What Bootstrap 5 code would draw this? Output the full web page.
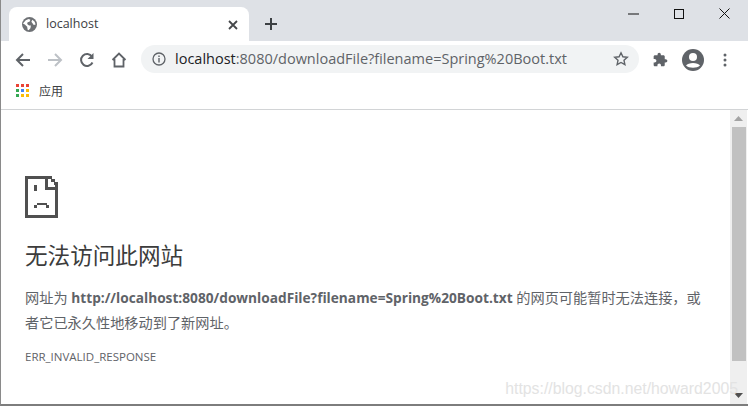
<!DOCTYPE html>
<html lang="zh">
<head>
<meta charset="utf-8">
<title>localhost</title>
<link href="https://cdn.jsdelivr.net/npm/bootstrap@5.3.3/dist/css/bootstrap.min.css" rel="stylesheet">
<style>
html, body { height: 100%; overflow: hidden; }
body { font-family: "Open Sans", "Noto Sans CJK SC", sans-serif; background: #fff; color: #5f6368; }
.browser-win { height: 406px; width: 748px; border-left: 1px solid #8a8a8a; border-bottom: 2px solid #7d7d7d; position: relative; }
.tab-strip { height: 41px; background: #dee1e6; }
.tab-active { width: 240px; height: 34px; margin-left: 8px; background: #fff; border-radius: 8px 8px 0 0; padding: 1px 11px 0 13px; }
.tab-title { font-size: 12.5px; color: #3c4043; margin-left: 9px; }
.tab-new { margin-left: 8px; margin-bottom: 3px; }
.win-ctrls { margin-left: auto; margin-bottom: 22px; gap: 35px; padding-right: 18px; }
.tool-row { height: 37px; background: #fff; padding-left: 14px; }
.omni-box { width: 498px; height: 28px; background: #f1f3f4; border-radius: 14px; margin-left: 14px; padding-left: 11px; padding-right: 10px; margin-top: -1px; }
.omni-url { font-size: 14.5px; color: #5f6368; margin-left: 9px; white-space: nowrap; }
.omni-url b { font-weight: 400; color: #202124; }
.ext-icon { margin-left: 14px; }
.user-icon { margin-left: 14px; }
.more-icon { margin-left: 19px; }
.bm-row { height: 32px; border-bottom: 1px solid #d2d4d6; padding: 0 0 5px 15px; font-size: 12px; color: #3c4043; }
.bm-row span { margin-left: 9px; font-family: "Noto Sans CJK SC", sans-serif; }
.page-area { height: 294px; }
.err-main { width: 729px; padding: 66px 0 0 24px; }
.err-title { font-size: 22.6px; font-weight: 400; color: #3c3c3c; margin: 22px 0 0 0; line-height: 30px; font-family: "Noto Sans CJK SC", sans-serif; }
.err-text { font-size: 14.2px; line-height: 25px; color: #5f6368; margin: 15px 0 0 0; white-space: nowrap; }
.err-text b { color: #5f6368; font-weight: 700; font-size: 13.7px; }
.err-code { font-size: 11.5px; color: #5f6368; margin: 14px 0 0 0; line-height: 16px; }
.scroll-track { width: 17px; background: #efefef; }
.scroll-thumb { width: 14px; height: 234px; background: #c1c1c1; margin: 0 auto; }
.scroll-end { height: 17px; }
.csdn-mark { position: absolute; right: 10px; bottom: 3px; font-family: "Liberation Sans", sans-serif; font-size: 15.8px; color: #e3e3e3; }
</style>
</head>
<body>
<div class="browser-win">
    <div class="tab-strip d-flex align-items-end">
        <div class="tab-active d-flex align-items-center">
            <svg width="15" height="15" viewBox="0 0 16 16"><circle cx="8" cy="8" r="8" fill="#6e7175"/><path d="M4 3.500l3-1.500 2 1-1 2-2 .5-.5 2 2 1.500 2 0-.5 3-2 2-1-.5-.5-3-2.500-2.500-2-1zM11 3l2.500 2 1 3-2 .5-1.500-2-1-1.500z" fill="#fff"/></svg>
            <span class="tab-title">localhost</span>
            <svg class="ms-auto" width="10" height="10" viewBox="0 0 10 10"><path d="M1 1l8 8M9 1l-8 8" stroke="#45474a" stroke-width="1.800"/></svg>
        </div>
        <svg class="tab-new" width="28" height="28" viewBox="0 0 28 28"><path d="M14 8v12M8 14h12" stroke="#3c4043" stroke-width="2"/></svg>
        <div class="win-ctrls d-flex align-items-center">
            <svg width="11" height="10" viewBox="0 0 11 10"><path d="M0 5h11" stroke="#111" stroke-width="1"/></svg>
            <svg width="10" height="10" viewBox="0 0 10 10"><rect x=".5" y=".5" width="9" height="9" fill="none" stroke="#111"/></svg>
            <svg width="11" height="11" viewBox="0 0 11 11"><path d="M.5.5l10 10M10.500.5l-10 10" stroke="#111" stroke-width="1"/></svg>
        </div>
    </div>
    <div class="tool-row d-flex align-items-center">
        <svg width="16" height="16" viewBox="0 0 16 16"><path d="M15 8H2.500M8 2L2 8l6 6" fill="none" stroke="#5f6368" stroke-width="2"/></svg>
        <svg class="ms-3" width="16" height="16" viewBox="0 0 16 16"><path d="M1 8h12.500M8 2l6 6-6 6" fill="none" stroke="#bdc1c6" stroke-width="2"/></svg>
        <svg class="ms-3" width="16" height="16" viewBox="0 0 16 16"><path d="M13.500 10.500A6 6 0 1 1 13 4.500" fill="none" stroke="#5f6368" stroke-width="2"/><path d="M14.500 1v6h-6z" fill="#5f6368"/></svg>
        <svg class="ms-3" width="16" height="16" viewBox="0 0 16 16"><path d="M1.500 8L8 1.500 14.500 8M3.500 7v7.500h9V7" fill="none" stroke="#5f6368" stroke-width="1.800"/></svg>
        <div class="omni-box d-flex align-items-center">
            <svg width="14" height="14" viewBox="0 0 14 14"><circle cx="7" cy="7" r="6" fill="none" stroke="#5f6368" stroke-width="1.300"/><path d="M7 6v4.500M7 3.500v1.500" stroke="#5f6368" stroke-width="1.400"/></svg>
            <span class="omni-url"><b>localhost</b>:8080/downloadFile?filename=Spring%20Boot.txt</span>
            <svg class="ms-auto" width="16" height="16" viewBox="0 0 16 16"><path d="M8 1.800l1.900 4 4.400.5-3.300 3 .9 4.400L8 11.500l-3.900 2.200.9-4.400-3.300-3 4.400-.5z" fill="none" stroke="#5f6368" stroke-width="1.400"/></svg>
        </div>
        <svg class="ext-icon" width="15" height="15" viewBox="1 0 23 23"><path d="M20.500 11H19V7c0-1.100-.9-2-2-2h-4V3.500C13 2.120 11.880 1 10.500 1S8 2.120 8 3.500V5H4c-1.100 0-1.990.9-1.990 2v3.800H3.500c1.490 0 2.700 1.210 2.700 2.700s-1.210 2.700-2.700 2.700H2V20c0 1.100.9 2 2 2h3.800v-1.500c0-1.490 1.210-2.700 2.700-2.700 1.490 0 2.700 1.210 2.700 2.700V22H17c1.100 0 2-.9 2-2v-4h1.500c1.380 0 2.500-1.120 2.500-2.500S21.880 11 20.500 11z" fill="#5f6368"/></svg>
        <svg class="user-icon" width="22" height="22" viewBox="0 0 22 22"><circle cx="11" cy="11" r="11" fill="#5f6368"/><circle cx="11" cy="8" r="4" fill="#fff"/><path d="M4 16.500c2-3.500 12-3.500 14 0-3 3-11 3-14 0z" fill="#fff"/></svg>
        <svg class="more-icon" width="4" height="14" viewBox="0 0 4 14"><circle cx="2" cy="2" r="1.500" fill="#5f6368"/><circle cx="2" cy="7" r="1.500" fill="#5f6368"/><circle cx="2" cy="12" r="1.500" fill="#5f6368"/></svg>
    </div>
    <div class="bm-row d-flex align-items-center">
        <svg width="14" height="14" viewBox="0 0 14 14"><rect x="0" y="0" width="3" height="3" fill="#ea4335"/><rect x="5" y="0" width="3" height="3" fill="#ea4335"/><rect x="10" y="0" width="3" height="3" fill="#ea4335"/><rect x="0" y="5" width="3" height="3" fill="#34a853"/><rect x="5" y="5" width="3" height="3" fill="#4285f4"/><rect x="10" y="5" width="3" height="3" fill="#fbbc05"/><rect x="0" y="10" width="3" height="3" fill="#34a853"/><rect x="5" y="10" width="3" height="3" fill="#fbbc05"/><rect x="10" y="10" width="3" height="3" fill="#fbbc05"/></svg>
        <span>应用</span>
    </div>
    <div class="page-area d-flex">
        <div class="err-main">
            <svg class="d-block" width="33" height="42" viewBox="0 0 33 42" shape-rendering="crispEdges"><path fill-rule="evenodd" d="M0 0H27V3H30V6H33V42H0ZM3 3V39H30V14H20V3ZM23 3V11H30V9H29V6H26V3Z" fill="#505050"/><path d="M9 9h3v6H9zM12 27h10v2H12zM9 29h3v3H9zM21 29h3v3h-3z" fill="#505050"/></svg>
            <h1 class="err-title">无法访问此网站</h1>
            <p class="err-text"><span>网址为</span> <b>http://localhost:8080/downloadFile?filename=Spring%20Boot.txt</b> <span>的网页可能暂时无法连接，或</span><br><span>者它已永久性地移动到了新网址。</span></p>
            <p class="err-code">ERR_INVALID_RESPONSE</p>
        </div>
        <div class="scroll-track d-flex flex-column">
            <div class="scroll-end d-flex align-items-center justify-content-center"><svg width="9" height="5" viewBox="0 0 9 5"><path d="M4.500 0L9 5H0z" fill="#a3a3a3"/></svg></div>
            <div class="scroll-thumb"></div>
            <div class="scroll-end d-flex align-items-center justify-content-center mt-auto"><svg width="9" height="5" viewBox="0 0 9 5"><path d="M0 0h9L4.500 5z" fill="#505050"/></svg></div>
        </div>
    </div>
    <div class="csdn-mark">https://blog.csdn.net/howard2005</div>
</div>
<script src="https://cdn.jsdelivr.net/npm/bootstrap@5.3.3/dist/js/bootstrap.bundle.min.js"></script>
</body>
</html>
